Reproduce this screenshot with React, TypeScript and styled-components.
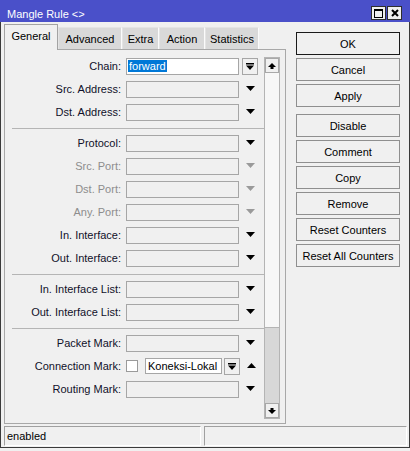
import React from 'react'
import styled, { createGlobalStyle } from 'styled-components'

const GlobalStyle = createGlobalStyle`
  html, body {
    margin: 0;
    padding: 0;
    background: #f0f0f0;
  }
  body {
    font-family: "Liberation Sans", Arial, sans-serif;
    font-size: 11px;
    color: #000;
  }
  * {
    box-sizing: border-box;
  }
`

const Window = styled.div`
  width: 410px;
  height: 448px;
  display: flex;
  flex-direction: column;
  background: #f0f0f0;
`

const TitleBar = styled.div`
  height: 22px;
  flex: none;
  display: flex;
  align-items: flex-start;
  background: #4a50c9;
  color: #fff;
  padding: 0 8px 0 7px;
`

const Title = styled.div`
  flex: 1;
  padding-top: 8px;
  line-height: 13px;
  font-size: 11px;
`

const TitleButtons = styled.div`
  display: flex;
  gap: 1px;
  margin-top: 6px;
`

const TitleButton = styled.div`
  width: 15px;
  height: 14px;
  background: #f0f0f0;
  border: 1px solid #2e2e2e;
  display: flex;
  align-items: center;
  justify-content: center;
`

const Frame = styled.div`
  flex: 1;
  display: flex;
  flex-direction: column;
  border: 1px solid #3a3a3a;
  border-top: none;
  padding-bottom: 1px;
`

const Main = styled.div`
  height: 403px;
  display: flex;
  padding: 2px 0 0 3px;
  gap: 10px;
`

const LeftCol = styled.div`
  width: 282px;
  display: flex;
  flex-direction: column;
`

const TabRow = styled.div`
  height: 26px;
  display: flex;
  align-items: flex-end;
  margin-bottom: -1px;
  position: relative;
  z-index: 1;
`

const Tab = styled.div<{ $active?: boolean; $w: number }>`
  width: ${({ $w }) => $w}px;
  height: ${({ $active }) => ($active ? 26 : 22)}px;
  margin-bottom: ${({ $active }) => ($active ? 0 : 1)}px;
  display: flex;
  align-items: center;
  justify-content: center;
  padding-bottom: ${({ $active }) => ($active ? 3 : 0)}px;
  background: ${({ $active }) => ($active ? '#f0f0f0' : '#d9d9d9')};
  border: 1px solid ${({ $active }) => ($active ? '#a3a3a3' : '#e4e4e4')};
  border-bottom: none;
  border-right-color: ${({ $active }) => ($active ? '#a3a3a3' : '#fbfbfb')};
  color: #000;
`

const Panel = styled.div`
  height: 375px;
  border: 1px solid #a8a8a8;
  display: flex;
  padding: 7px 5px 4px 0;
`

const Form = styled.div`
  flex: 1;
  padding-top: 1px;
`

const Row = styled.div`
  height: 23px;
  display: flex;
  align-items: flex-start;
`

const Label = styled.div<{ $disabled?: boolean }>`
  width: 116px;
  height: 17px;
  line-height: 17px;
  text-align: right;
  color: ${({ $disabled }) => ($disabled ? '#8d8d8d' : '#10102a')};
  white-space: nowrap;
`

const Field = styled.div<{ $white?: boolean; $w?: number }>`
  width: ${({ $w }) => $w ?? 113}px;
  height: 17px;
  margin-left: 5px;
  border: 1px solid #a6a6a6;
  background: ${({ $white }) => ($white ? '#fff' : 'transparent')};
  line-height: 15px;
  padding-left: 1px;
  white-space: nowrap;
  overflow: hidden;
`

const Selected = styled.span`
  background: #0078d7;
  color: #fff;
  padding: 0 1px;
`

const ValueBox = styled.div`
  width: 77px;
  height: 16px;
  margin-left: 7px;
  border: 1px solid #a6a6a6;
  background: #fff;
  line-height: 14px;
  padding-left: 2px;
  white-space: nowrap;
`

const Check = styled.div`
  width: 12px;
  height: 12px;
  margin: 2px 0 0 5px;
  border: 1px solid #9a9a9a;
  background: #fff;
`

const ArrowSlot = styled.div`
  width: 16px;
  height: 17px;
  margin-left: 3px;
  display: flex;
  align-items: center;
  justify-content: center;
  padding-bottom: 2px;
`

const DropButton = styled.div<{ $gap?: number }>`
  width: 16px;
  height: 17px;
  margin-left: ${({ $gap }) => $gap ?? 3}px;
  border: 1px solid #a6a6a6;
  background: #f0f0f0;
  display: flex;
  align-items: center;
  justify-content: center;
`

const Separator = styled.div`
  height: 1px;
  margin: 1px 0 6px 7px;
  background: #b5b5b5;
`

const ScrollBar = styled.div`
  width: 16px;
  border: 1px solid #b4b4b4;
  display: flex;
  flex-direction: column;
  background: #f4f4f4;
`

const ScrollButton = styled.div`
  height: 15px;
  flex: none;
  display: flex;
  align-items: center;
  justify-content: center;
  background: #f0f0f0;
  border: 1px solid #a8a8a8;
`

const Thumb = styled.div`
  height: 255px;
  flex: none;
  background: #f7f7f7;
  border-bottom: 1px solid #b4b4b4;
`

const Track = styled.div`
  flex: 1;
  background: #d7d7d7;
`

const RightCol = styled.div`
  width: 104px;
  padding-top: 8px;
  display: flex;
  flex-direction: column;
`

const Button = styled.div<{ $default?: boolean; $gap?: boolean }>`
  height: 23px;
  margin-bottom: 3px;
  margin-top: ${({ $gap }) => ($gap ? 4 : 0)}px;
  border: 1px solid ${({ $default }) => ($default ? '#1a1a1a' : '#8f8f8f')};
  background: #f0f0f0;
  display: flex;
  align-items: center;
  justify-content: center;
  color: #000;
  white-space: nowrap;
`

const StatusBar = styled.div`
  height: 20px;
  margin-top: 1px;
  display: flex;
  gap: 3px;
  padding: 0 2px 0 3px;
`

const StatusCell = styled.div<{ $w?: number }>`
  ${({ $w }) => ($w ? `width: ${$w}px;` : 'flex: 1;')}
  border-top: 1px solid #a0a0a0;
  border-left: 1px solid #a0a0a0;
  border-right: 1px solid #fff;
  border-bottom: 1px solid #fff;
  line-height: 18px;
  padding-left: 2px;
`

const Down = ({ color = '#000' }: { color?: string }) => (
  <svg width="9" height="5" viewBox="0 0 9 5">
    <polygon points="0,0 9,0 4.5,5" fill={color} />
  </svg>
)

const Up = () => (
  <svg width="9" height="5" viewBox="0 0 9 5">
    <polygon points="0,5 9,5 4.5,0" fill="#000" />
  </svg>
)

const DropIcon = () => (
  <svg width="8" height="7" viewBox="0 0 8 7">
    <rect x="0" y="0" width="8" height="1.5" fill="#000" />
    <polygon points="0,2.5 8,2.5 4,7" fill="#000" />
  </svg>
)

const ScrollArrow = ({ up }: { up?: boolean }) => (
  <svg width="8" height="6" viewBox="0 0 8 6">
    {up ? (
      <>
        <polygon points="0,4 8,4 4,0" fill="#000" />
        <rect x="2.5" y="4" width="3" height="2" fill="#000" />
      </>
    ) : (
      <>
        <rect x="2.5" y="0" width="3" height="2" fill="#000" />
        <polygon points="0,2 8,2 4,6" fill="#000" />
      </>
    )}
  </svg>
)

type FieldRow = { label: string; disabled?: boolean }

const groups: FieldRow[][] = [
  [{ label: 'Src. Address:' }, { label: 'Dst. Address:' }],
  [
    { label: 'Protocol:' },
    { label: 'Src. Port:', disabled: true },
    { label: 'Dst. Port:', disabled: true },
    { label: 'Any. Port:', disabled: true },
    { label: 'In. Interface:' },
    { label: 'Out. Interface:' },
  ],
  [{ label: 'In. Interface List:' }, { label: 'Out. Interface List:' }],
]

const PlainRow = ({ label, disabled }: FieldRow) => (
  <Row>
    <Label $disabled={disabled}>{label}</Label>
    <Field />
    <ArrowSlot>
      <Down color={disabled ? '#9a9a9a' : '#000'} />
    </ArrowSlot>
  </Row>
)

const tabs = [
  { name: 'General', w: 54 },
  { name: 'Advanced', w: 64 },
  { name: 'Extra', w: 37 },
  { name: 'Action', w: 46 },
  { name: 'Statistics', w: 54 },
]

const buttons = [
  { name: 'OK', def: true },
  { name: 'Cancel' },
  { name: 'Apply' },
  { name: 'Disable', gap: true },
  { name: 'Comment' },
  { name: 'Copy' },
  { name: 'Remove' },
  { name: 'Reset Counters' },
  { name: 'Reset All Counters' },
]

export default function App() {
  return (
    <>
      <GlobalStyle />
      <Window>
        <TitleBar>
          <Title>Mangle Rule &lt;&gt;</Title>
          <TitleButtons>
            <TitleButton>
              <svg width="9" height="9" viewBox="0 0 9 9">
                <rect x="0.5" y="0.5" width="8" height="8" fill="none" stroke="#000" />
                <rect x="0" y="0" width="9" height="2" fill="#000" />
              </svg>
            </TitleButton>
            <TitleButton>
              <svg width="8" height="8" viewBox="0 0 8 8">
                <path d="M1 1 L7 7 M7 1 L1 7" stroke="#000" strokeWidth="2" />
              </svg>
            </TitleButton>
          </TitleButtons>
        </TitleBar>
        <Frame>
          <Main>
            <LeftCol>
              <TabRow>
                {tabs.map((t, i) => (
                  <Tab key={t.name} $w={t.w} $active={i === 0}>
                    {t.name}
                  </Tab>
                ))}
              </TabRow>
              <Panel>
                <Form>
                  <Row>
                    <Label>Chain:</Label>
                    <Field $white>
                      <Selected>forward</Selected>
                    </Field>
                    <DropButton>
                      <DropIcon />
                    </DropButton>
                  </Row>
                  {groups.map((g, gi) => (
                    <React.Fragment key={gi}>
                      {gi > 0 && <Separator />}
                      {g.map((r) => (
                        <PlainRow key={r.label} {...r} />
                      ))}
                    </React.Fragment>
                  ))}
                  <Separator />
                  <PlainRow label="Packet Mark:" />
                  <Row>
                    <Label>Connection Mark:</Label>
                    <Check />
                    <ValueBox>Koneksi-Lokal</ValueBox>
                    <DropButton $gap={2}>
                      <DropIcon />
                    </DropButton>
                    <ArrowSlot>
                      <Up />
                    </ArrowSlot>
                  </Row>
                  <PlainRow label="Routing Mark:" />
                </Form>
                <ScrollBar>
                  <ScrollButton>
                    <ScrollArrow up />
                  </ScrollButton>
                  <Thumb />
                  <Track />
                  <ScrollButton>
                    <ScrollArrow />
                  </ScrollButton>
                </ScrollBar>
              </Panel>
            </LeftCol>
            <RightCol>
              {buttons.map((b) => (
                <Button key={b.name} $default={b.def} $gap={b.gap}>
                  {b.name}
                </Button>
              ))}
            </RightCol>
          </Main>
          <StatusBar>
            <StatusCell $w={197}>enabled</StatusCell>
            <StatusCell />
          </StatusBar>
        </Frame>
      </Window>
    </>
  )
}
